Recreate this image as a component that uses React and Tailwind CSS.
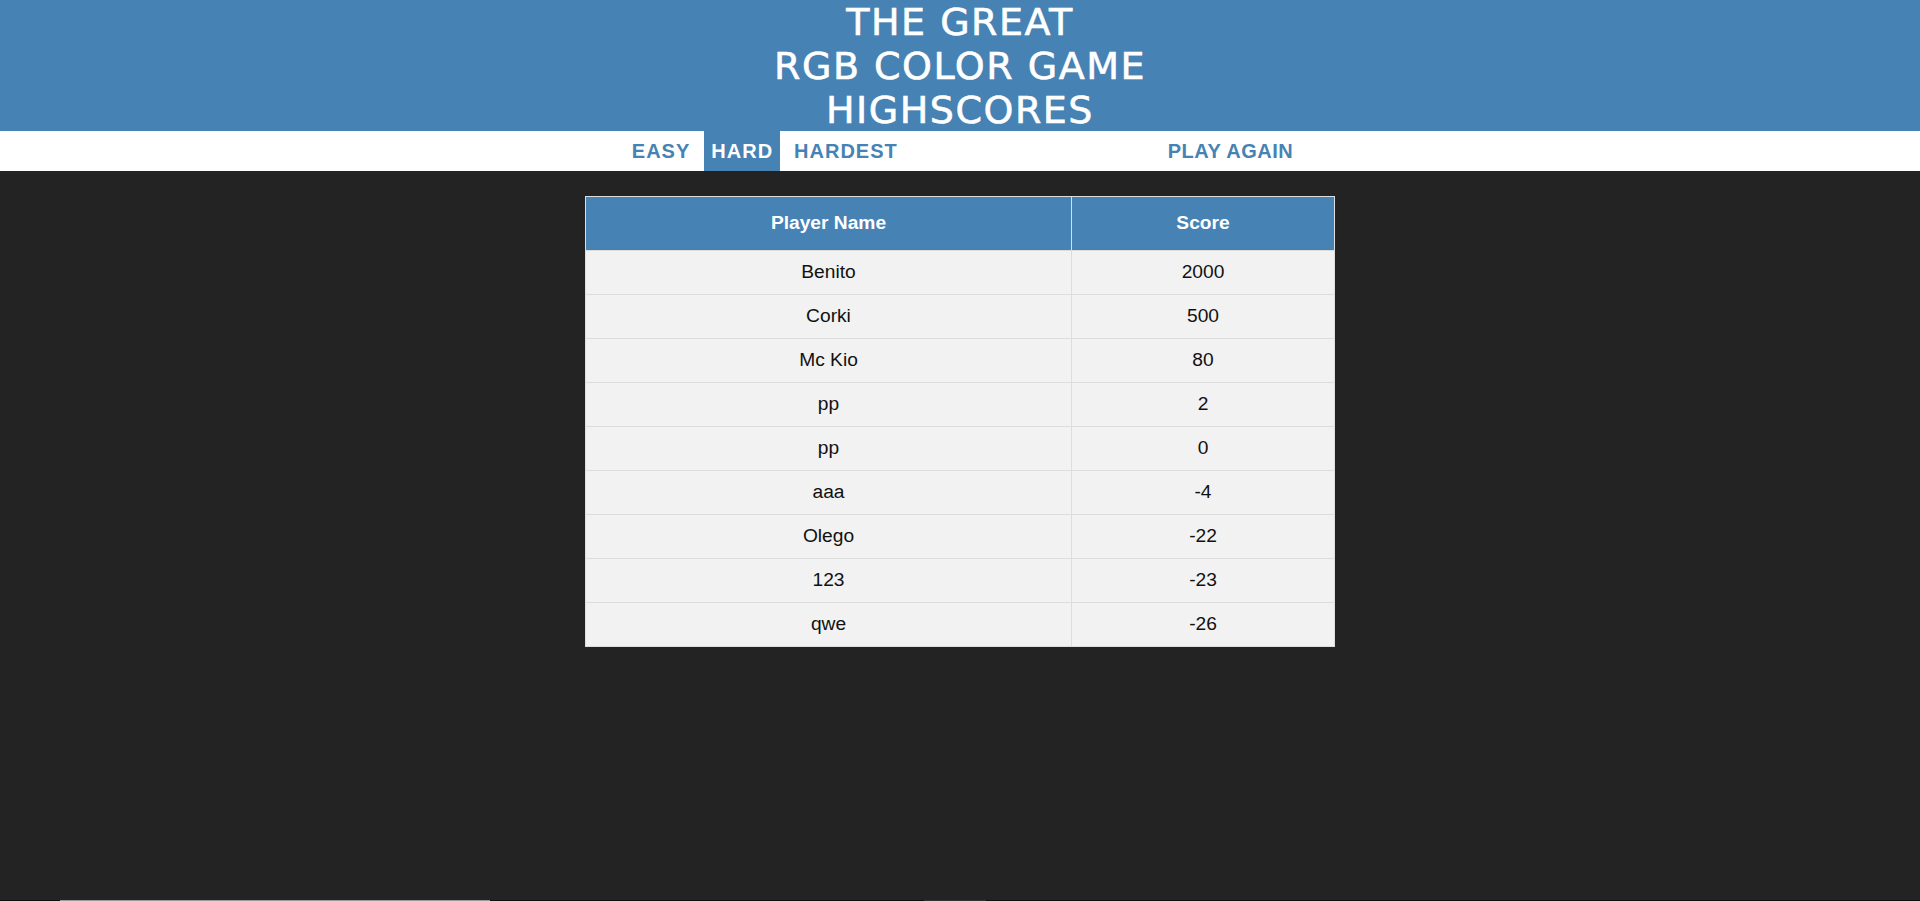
const scores = [
  { name: "Benito", score: 2000 },
  { name: "Corki", score: 500 },
  { name: "Mc Kio", score: 80 },
  { name: "pp", score: 2 },
  { name: "pp", score: 0 },
  { name: "aaa", score: -4 },
  { name: "Olego", score: -22 },
  { name: "123", score: -23 },
  { name: "qwe", score: -26 },
];

const modes = ["Easy", "Hard", "Hardest"];

function ModeButton({ label, selected }) {
  return (
    <button
      className={
        selected
          ? "h-full px-[7px] uppercase font-bold tracking-[1px] bg-[#4682b4] text-white"
          : "h-full px-[7px] uppercase font-bold tracking-[1px] text-[#4682b4]"
      }
    >
      {label}
    </button>
  );
}

export default function App() {
  return (
    <div className="h-[901px] flex flex-col bg-[#232323] font-['Liberation_Sans',Arial,sans-serif]">
      <h1 className="h-[131px] bg-[#4682b4] text-white text-center uppercase text-[38px] leading-[44px] tracking-[1.5px] font-['DejaVu_Sans',sans-serif] font-normal [-webkit-text-stroke:0.6px_white]">
        The Great
        <br />
        RGB Color Game
        <br />
        Highscores
      </h1>

      <div className="h-[40px] bg-white flex justify-center items-stretch pl-[5px] text-[20px]">
        <div className="flex items-stretch gap-[7px]">
          {modes.map((m) => (
            <ModeButton key={m} label={m} selected={m === "Hard"} />
          ))}
        </div>
        <div className="w-[256px]" />
        <button className="h-full px-[7px] uppercase font-bold tracking-[0.5px] text-[#4682b4]">
          Play Again
        </button>
      </div>

      <div className="flex-1 flex justify-center pt-[25px]">
        <table className="w-[750px] h-fit border border-[#ddd] border-collapse text-[19.2px]">
          <thead>
            <tr className="bg-[#4682b4] text-white h-[54px]">
              <th className="w-[486px] border-r border-[#ddd] font-bold">Player Name</th>
              <th className="font-bold">Score</th>
            </tr>
          </thead>
          <tbody>
            {scores.map((s, i) => (
              <tr key={i} className="bg-[#f2f2f2] text-[#111] h-[44px] border-t border-[#ddd]">
                <td className="text-center border-r border-[#ddd]">{s.name}</td>
                <td className="text-center">{s.score}</td>
              </tr>
            ))}
          </tbody>
        </table>
      </div>

      <div className="h-px flex bg-[#111]">
        <div className="w-[60px]" />
        <div className="w-[430px] bg-[#9a9a9a]" />
        <div className="w-[434px]" />
        <div className="w-[62px] bg-[#333]" />
      </div>
    </div>
  );
}
